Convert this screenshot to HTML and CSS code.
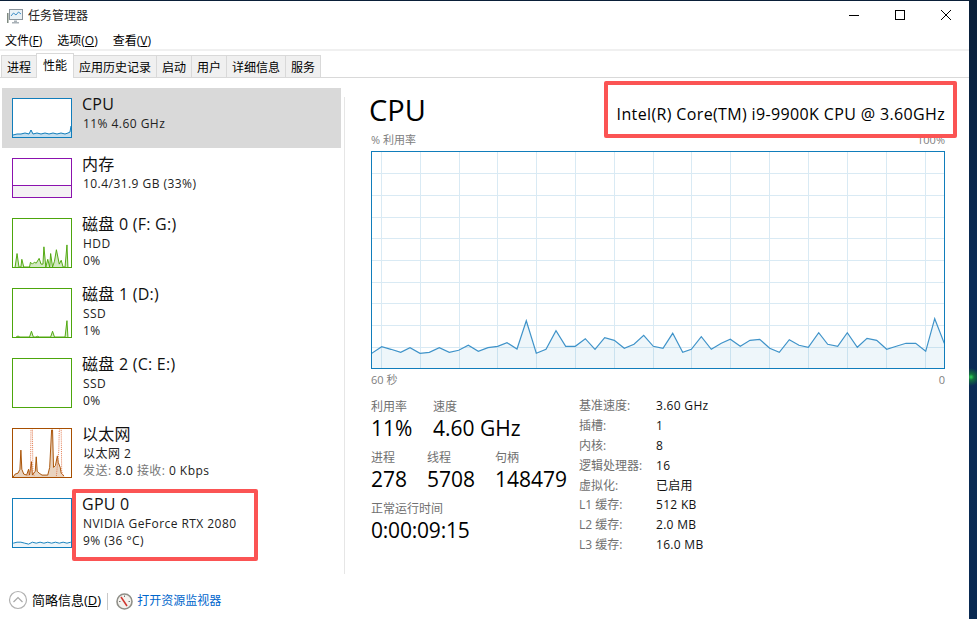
FILE: index.html
```html
<!DOCTYPE html>
<html lang="zh-CN">
<head>
  <meta charset="UTF-8" />
  <meta name="viewport" content="width=device-width, initial-scale=1" />
  <title>任务管理器</title>
  <link rel="stylesheet" href="styles.css">
</head>
<body>
<div class="window">
  <div class="titlebar">
    <svg class="app-icon" width="17" height="16" viewBox="0 0 17 16">
      <rect x="3.500" y="1.500" width="13" height="10" fill="#eaf1f6" stroke="#8a949c"/>
      <path d="M5 8l2.500-3 2.500 2 2.500-3 2.500 2" fill="none" stroke="#3f8fc9"/>
      <rect x="1" y="5" width="1.500" height="10" fill="#7f8a80"/>
      <path d="M8 12.500h3v1.500h2v1.500H6V14h2z" fill="#aab2b8"/>
    </svg>
    <span class="title-text">任务管理器</span>
    <div class="win-btns">
      <span class="win-btn"><svg width="10" height="10"><path d="M0 5.500h10" stroke="#000"/></svg></span>
      <span class="win-btn"><svg width="10" height="10"><rect x=".5" y=".5" width="9" height="9" fill="none" stroke="#000"/></svg></span>
      <span class="win-btn"><svg width="10" height="10"><path d="M0 0l10 10M10 0L0 10" stroke="#000"/></svg></span>
    </div>
  </div>

  <div class="menubar">
    <span>文件(<u>F</u>)</span>
    <span>选项(<u>O</u>)</span>
    <span>查看(<u>V</u>)</span>
  </div>

  <div class="tabs">
    <span class="tab">进程</span>
    <span class="tab active">性能</span>
    <span class="tab">应用历史记录</span>
    <span class="tab">启动</span>
    <span class="tab">用户</span>
    <span class="tab">详细信息</span>
    <span class="tab">服务</span>
  </div>

  <div class="main">
    <div class="sidebar">
      <div class="item selected">
        <svg class="thumb blue" viewBox="0 0 58 38" width="60" height="40">
          <polygon class="f" points="0,36 4,35 8,35 12,34 16,35 18,31 20,35 24,34 28,35 32,34 36,35 40,34 44,35 48,34 52,35 55,34 57,33 58,27 58,38 0,38"/>
          <polyline class="l" points="0,36 4,35 8,35 12,34 16,35 18,31 20,35 24,34 28,35 32,34 36,35 40,34 44,35 48,34 52,35 55,34 57,33 58,27"/>
        </svg>
        <div class="info"><b>CPU</b><span>11% 4.60 GHz</span></div>
      </div>
      <div class="item">
        <svg class="thumb purple" viewBox="0 0 58 38" width="60" height="40">
          <rect y="26" width="58" height="12" fill="#f4f2f4"/>
          <path d="M0 26.500h58" stroke="#8b12ae"/>
        </svg>
        <div class="info"><b>内存</b><span>10.4/31.9 GB (33%)</span></div>
      </div>
      <div class="item tall">
        <svg class="thumb green" viewBox="0 0 60 50" width="60" height="50">
          <polygon class="f" points="2,50 4,36 6,50 8,50 9,42 11,50 17,50 18,45 20,47 22,45 24,46 27,41 29,47 31,47 32,29 34,50 36,42 38,50 39,36 41,50 43,44 45,32 48,47 50,43 52,50 54,50 56,27 57,50"/>
          <polyline class="l" points="2,50 4,36 6,50 8,50 9,42 11,50 17,50 18,45 20,47 22,45 24,46 27,41 29,47 31,47 32,29 34,50 36,42 38,50 39,36 41,50 43,44 45,32 48,47 50,43 52,50 54,50 56,27 57,50"/>
        </svg>
        <div class="info"><b>磁盘 0 (F: G:)</b><span>HDD</span><span>0%</span></div>
      </div>
      <div class="item tall">
        <svg class="thumb green" viewBox="0 0 60 50" width="60" height="50">
          <polygon class="f" points="3,50 5,49 7,50 17,50 19,44 21,50 24,50 25,49 27,50 39,50 41,44 43,50 54,50 56,33 57,50"/>
          <polyline class="l" points="3,50 5,49 7,50 17,50 19,44 21,50 24,50 25,49 27,50 39,50 41,44 43,50 54,50 56,33 57,50"/>
        </svg>
        <div class="info"><b>磁盘 1 (D:)</b><span>SSD</span><span>1%</span></div>
      </div>
      <div class="item tall">
        <svg class="thumb green" viewBox="0 0 60 50" width="60" height="50"></svg>
        <div class="info"><b>磁盘 2 (C: E:)</b><span>SSD</span><span>0%</span></div>
      </div>
      <div class="item tall">
        <svg class="thumb orange" viewBox="0 0 60 50" width="60" height="50">
          <polygon class="f" points="0,50 2,47 5,46 7,42 8,22 9,42 11,47 14,48 16,42 17,48 19,34 20,48 23,44 24,29 25,44 27,46 30,48 36,48 38,40 40,1 41,1 42,40 44,38 46,28 47,35 49,40 50,46 53,49 53,50"/>
          <polyline class="l" points="0,50 2,47 5,46 7,42 8,22 9,42 11,47 14,48 16,42 17,48 19,34 20,48 23,44 24,29 25,44 27,46 30,48 36,48 38,40 40,1 41,1 42,40 44,38 46,28 47,35 49,40 50,46 53,49"/>
          <polyline class="d" points="15,49 18,44 18.500,1 20,1 20.500,46 22,49"/>
          <polyline class="d" points="45,49 47.500,22 48,1 50,1 50.500,44 52,49"/>
        </svg>
        <div class="info"><b>以太网</b><span>以太网 2</span><span><i>发送:</i> 8.0 <i>接收:</i> 0 Kbps</span></div>
      </div>
      <div class="item tall">
        <svg class="thumb blue gpu" viewBox="0 0 60 50" width="60" height="50">
          <polygon class="f" points="0,46 4,45 8,45 12,46 16,47 20,45 24,46 28,45 32,46 36,45 40,46 44,45 48,46 52,45 56,46 60,45 60,50 0,50"/>
          <polyline class="l" points="0,46 4,45 8,45 12,46 16,47 20,45 24,46 28,45 32,46 36,45 40,46 44,45 48,46 52,45 56,46 60,45"/>
        </svg>
        <div class="info"><b>GPU 0</b><span>NVIDIA GeForce RTX 2080</span><span>9% (36 °C)</span></div>
      </div>
    </div>

    <div class="detail">
      <div class="head">
        <h1>CPU</h1>
        <div class="model">Intel(R) Core(TM) i9-9900K CPU @ 3.60GHz</div>
      </div>
      <div class="axis top"><span>% 利用率</span><span>100%</span></div>
      <svg class="graph" width="574" height="218" viewBox="372 152 572 216">
        <path class="grid" d="M381.5 151V370M420.5 151V370M459.5 151V370M497.5 151V370M536.5 151V370M575.5 151V370M614.5 151V370M653.5 151V370M691.5 151V370M730.5 151V370M769.5 151V370M808.5 151V370M847.5 151V370M886.5 151V370M925.5 151V370M371 173.5H945M371 195.5H945M371 217.5H945M371 238.5H945M371 260.5H945M371 282.5H945M371 303.5H945M371 325.5H945M371 347.5H945"/>
        <polygon class="area" points="371.7,353.3 381.7,346.7 391,349.3 400.7,352.3 410,347.7 420,353.3 429.3,352.3 439.3,347.7 449.3,352.3 458.7,350.3 468.3,345.3 478.3,351.3 488,347.7 497.7,346.3 507,342.7 517,349 526.3,320.7 536.3,353.3 546,349.3 556,330.7 565.7,346.3 575.3,346.3 585.3,338.7 595,349.3 604.7,337.7 614.3,340.3 624.3,348.3 634,344.3 643.7,335.3 653.3,346.3 663,348.3 672.7,333.3 682.7,352.3 691.3,349.3 701.3,336.7 711.3,349.3 721.3,343.3 730.3,339.3 740.3,346.3 750,340.3 759.7,339.3 769.7,348.3 779.3,352.3 789.3,339.7 799,345.3 808.3,347.3 818.7,332.7 827.7,344.3 837.7,346.3 847.3,332.7 857.3,347.3 867,338.3 876.7,340.3 886.7,349.3 896.3,346.3 906,343.3 915.7,343.3 925.7,351.3 934.7,318.7 944.3,343.3 944.3,369 371.7,369"/>
        <polyline class="line" points="371.7,353.3 381.7,346.7 391,349.3 400.7,352.3 410,347.7 420,353.3 429.3,352.3 439.3,347.7 449.3,352.3 458.7,350.3 468.3,345.3 478.3,351.3 488,347.7 497.7,346.3 507,342.7 517,349 526.3,320.7 536.3,353.3 546,349.3 556,330.7 565.7,346.3 575.3,346.3 585.3,338.7 595,349.3 604.7,337.7 614.3,340.3 624.3,348.3 634,344.3 643.7,335.3 653.3,346.3 663,348.3 672.7,333.3 682.7,352.3 691.3,349.3 701.3,336.7 711.3,349.3 721.3,343.3 730.3,339.3 740.3,346.3 750,340.3 759.7,339.3 769.7,348.3 779.3,352.3 789.3,339.7 799,345.3 808.3,347.3 818.7,332.7 827.7,344.3 837.7,346.3 847.3,332.7 857.3,347.3 867,338.3 876.7,340.3 886.7,349.3 896.3,346.3 906,343.3 915.7,343.3 925.7,351.3 934.7,318.7 944.3,343.3"/>
      </svg>
      <div class="axis bottom"><span>60 秒</span><span>0</span></div>

      <div class="stats">
        <div class="live">
          <div class="row">
            <div class="stat w62"><label>利用率</label><strong>11%</strong></div>
            <div class="stat"><label>速度</label><strong>4.60 GHz</strong></div>
          </div>
          <div class="row">
            <div class="stat w56"><label>进程</label><strong>278</strong></div>
            <div class="stat w68"><label>线程</label><strong>5708</strong></div>
            <div class="stat"><label>句柄</label><strong>148479</strong></div>
          </div>
          <div class="row">
            <div class="stat"><label>正常运行时间</label><strong class="uptime">0:00:09:15</strong></div>
          </div>
        </div>
        <dl class="specs">
          <dt>基准速度:</dt><dd>3.60 GHz</dd>
          <dt>插槽:</dt><dd>1</dd>
          <dt>内核:</dt><dd>8</dd>
          <dt>逻辑处理器:</dt><dd>16</dd>
          <dt>虚拟化:</dt><dd>已启用</dd>
          <dt>L1 缓存:</dt><dd>512 KB</dd>
          <dt>L2 缓存:</dt><dd>2.0 MB</dd>
          <dt>L3 缓存:</dt><dd>16.0 MB</dd>
        </dl>
      </div>
    </div>
  </div>

  <div class="footer">
    <span class="collapse"><svg width="20" height="20" viewBox="0 0 20 20"><circle cx="10" cy="10" r="8.500" fill="none" stroke="#b0b0b0" stroke-width="1.200"/><path d="M5.500 12L10 7.500l4.500 4.500" fill="none" stroke="#a8a8a8" stroke-width="1.200"/></svg></span>
    <span class="less">简略信息(<u>D</u>)</span>
    <span class="vsep"></span>
    <svg class="monitor" width="17" height="17" viewBox="0 0 17 17">
      <circle cx="8.500" cy="8.500" r="7.500" fill="#f4f2ee" stroke="#8f8f88" stroke-width="1.600"/>
      <path d="M5 4l6 9" stroke="#d0342c" stroke-width="1.500"/>
      <path d="M8.500 2.500v1.500M14 8.500h-1.500M3 8.500h1.500" stroke="#777"/>
    </svg>
    <span class="link">打开资源监视器</span>
  </div>

  <div class="note note-model"></div>
  <div class="note note-gpu"></div>
</div>
</body>
</html>
```

FILE: styles.css
```css
html,body{margin:0;padding:0;height:100%;overflow:hidden;}
body{background:radial-gradient(circle at 971px 377px,#2fd35a 0,#12703f 3px,transparent 9px),linear-gradient(#0a1f38,#0a2c57 45%,#0a2a52);font-family:"Open Sans","Noto Sans CJK SC",sans-serif;font-size:12px;color:#000;}
.window{position:relative;width:969px;height:618px;margin-top:1px;background:#fff;display:flex;flex-direction:column;}

.titlebar{height:28px;display:flex;align-items:center;padding-left:6px;flex:none;}
.app-icon{margin:2px 5px 0 0;}
.title-text{font-size:12px;color:#222;}
.win-btns{margin-left:auto;display:flex;}
.win-btn{width:46px;height:28px;display:flex;align-items:center;justify-content:center;}

.menubar{height:18px;display:flex;gap:15px;padding:2px 0 0 5px;border-bottom:2px solid #f0f0f0;flex:none;line-height:19px;}

.tabs{height:26px;display:flex;align-items:flex-end;padding:0 0 0 1px;border-bottom:1px solid #d9d9d9;flex:none;}
.tab{height:21px;line-height:23px;padding:0 5px;background:#f0f0f0;border:1px solid #d9d9d9;border-bottom:none;margin-left:-1px;white-space:nowrap;}
.tab:first-child{margin-left:0;}
.tab.active{height:24px;line-height:23px;background:#fff;margin-bottom:-1px;position:relative;padding:0 6px;}

.main{flex:1;display:flex;min-height:0;}
.sidebar{width:339px;margin:10px 3px 0 2px;flex:none;}
.item{height:40px;padding:10px;display:flex;gap:10px;}
.item.tall{height:50px;}
.item.selected{background:#d9d9d9;}
.thumb{flex:none;background:#fff;box-sizing:border-box;border:1px solid;overflow:hidden;}
.thumb.blue{border-color:#117dbb;--c:#117dbb;}
.thumb.purple{border-color:#8b12ae;}
.thumb.green{border-color:#4da60c;--c:#4da60c;}
.thumb.orange{border-color:#a74f01;--c:#a74f01;}
.thumb .f{fill:var(--c);fill-opacity:.25;}
.thumb.gpu .f{fill-opacity:.08;}
.thumb .l{fill:none;stroke:var(--c);stroke-width:1;}
.thumb .d{fill:none;stroke:#e0764a;stroke-width:1;stroke-dasharray:1 1;}
.info{display:flex;flex-direction:column;margin-top:-5px;}
.info b{font-weight:400;font-size:16px;letter-spacing:.25px;line-height:22px;color:#111;white-space:nowrap;}
.info span{line-height:17px;color:#222;white-space:nowrap;letter-spacing:.45px;margin-left:1px;}
.info i{font-style:normal;color:#777;}

.detail{flex:1;margin-top:19px;margin-bottom:10px;border-left:1px solid #e6e6e6;padding:0 24px 0 26px;display:flex;flex-direction:column;min-width:0;}
.head{display:flex;justify-content:space-between;align-items:flex-start;height:35px;}
h1{margin:-1px 0 0 -2px;font-weight:400;font-size:29px;line-height:28px;}
.model{font-size:16px;letter-spacing:.36px;line-height:20px;margin-top:7px;white-space:nowrap;}
.axis{display:flex;justify-content:space-between;color:#808080;font-size:11px;line-height:16px;}
.axis.top{margin-bottom:3px;}
.axis.bottom{margin-top:3px;}
.graph{display:block;box-sizing:border-box;border:1px solid #117dbb;flex:none;width:574px;height:218px;}
.grid{stroke:#d9eaf4;fill:none;}
.area{fill:#117dbb;fill-opacity:.07;}
.line{fill:none;stroke:#3f93c9;stroke-width:1.200;}

.stats{display:flex;margin-top:10px;}
.live{width:208px;flex:none;}
.row{display:flex;margin-bottom:7px;}
.stat{display:flex;flex-direction:column;}
.stat label{color:#707070;line-height:17px;}
.stat strong{font-weight:400;font-size:21px;line-height:27px;white-space:nowrap;}
.stat strong.uptime{letter-spacing:-.2px;}
.w62{width:62px;}
.w56{width:56px;}
.w68{width:68px;}
.specs{margin:-2px 0 0;display:grid;grid-template-columns:77px auto;grid-auto-rows:19.900px;line-height:20px;justify-content:start;}
.specs dt{color:#707070;}
.specs dd{margin:0;color:#111;letter-spacing:.3px;}

.footer{height:35px;display:flex;align-items:center;padding-left:8px;flex:none;}
.less{font-size:13px;margin-left:4px;padding-bottom:4px;}
.vsep{width:1px;height:17px;background:#c8c8c8;margin:0 8px 0 6px;}
.monitor{margin-right:4px;}
.link{color:#0066cc;padding-bottom:4px;}

.note{position:absolute;box-sizing:border-box;border:4px solid #fb5454;border-radius:2px;}
.note-model{left:604px;top:80px;width:353px;height:57px;}
.note-gpu{left:72px;top:488px;width:186px;height:72px;}
```
